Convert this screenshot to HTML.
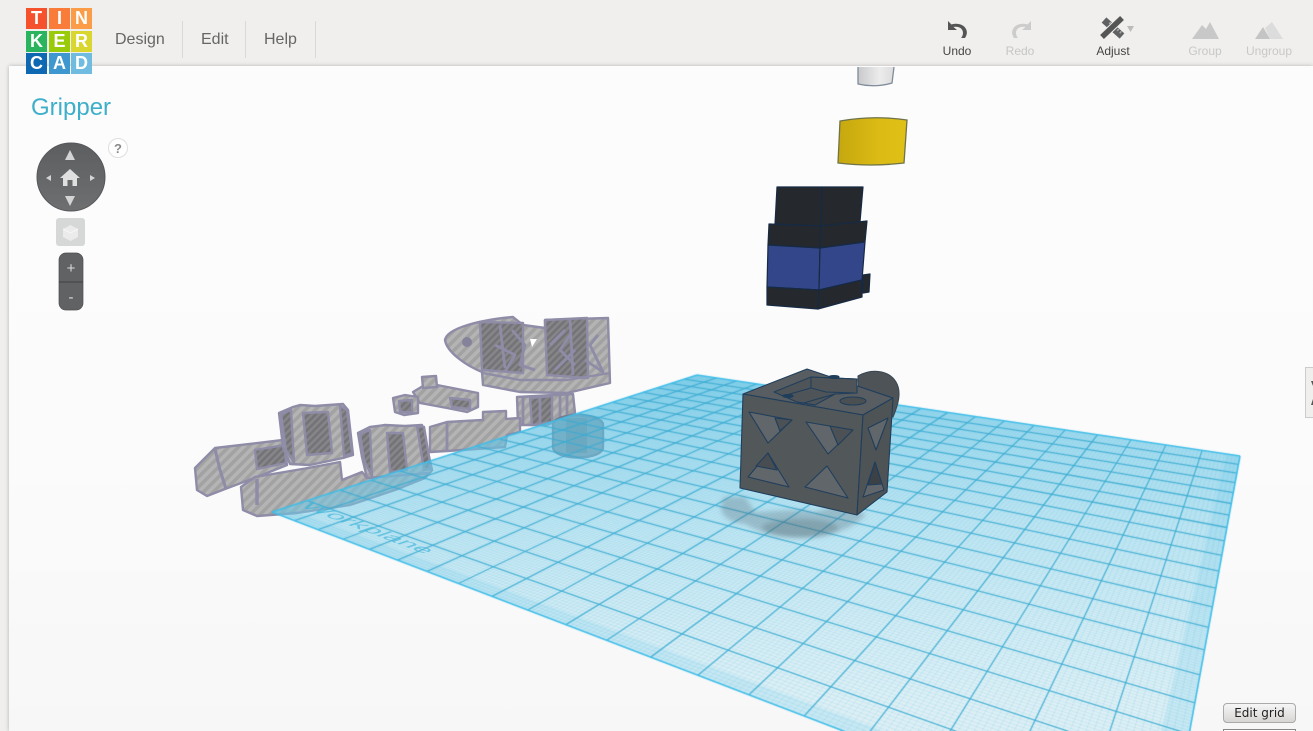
<!DOCTYPE html>
<html><head><meta charset="utf-8"><title>Gripper</title>
<style>
html,body{margin:0;padding:0;width:1313px;height:731px;overflow:hidden;background:#f0efed;font-family:"Liberation Sans",sans-serif}
#wrap{position:absolute;left:0;top:0;width:1313px;height:731px;overflow:hidden;background:#f0efed}
.abs{position:absolute}
#panel{position:absolute;left:9px;top:66px;width:1304px;height:665px;background:linear-gradient(#fcfcfc 0%,#fbfbfb 60%,#f7f7f7 100%);box-shadow:0 0 4px rgba(0,0,0,.25)}
svg,canvas{position:absolute;left:0;top:0}
.cell{position:absolute;width:21px;height:21px;color:#fff;font-weight:bold;font-size:18px;line-height:21px;text-align:center}
.menu{position:absolute;top:31px;font-size:16px;line-height:18px;color:#666}
.sep{position:absolute;top:21px;width:1px;height:37px;background:#d9d9d7}
.tl{position:absolute;top:44px;width:70px;text-align:center;font-size:12px;line-height:14px}
</style></head><body><div id="wrap">
<div id="panel"></div>
<svg width="1313" height="731" viewBox="0 0 1313 731">
<defs>
<pattern id="st" width="7" height="7" patternUnits="userSpaceOnUse" patternTransform="rotate(45)"><rect width="7" height="7" fill="#b4b4b4"/><rect width="3.500" height="7" fill="#a2a2a2"/></pattern>
<pattern id="dk" width="5" height="5" patternUnits="userSpaceOnUse" patternTransform="rotate(45)"><rect width="5" height="5" fill="#868689"/><rect width="2.500" height="5" fill="#737378"/></pattern>
</defs>
<g stroke="#8e8ca6" stroke-width="2.400" stroke-linejoin="round" fill="url(#st)">
<path d="M445 340C447 328 480 320 513 317L523 325L545 328V320L608 318L610 383L567 393L520 392L483 385L482 372C465 365 447 352 445 340Z"/>
<path d="M480 322L523 323V373L482 370Z" fill="url(#dk)"/>
<path d="M545 320L587 318L588 378L547 375Z" fill="url(#dk)"/>
<path d="M530 339L537 339L532 347Z" fill="#fff" stroke="none"/>
<circle cx="467" cy="342" r="5" fill="#85839b" stroke="none"/>
<path d="M495 345L515 355L505 372M512 330L525 345L520 365L535 370M570 335L560 350L575 365M598 335L590 345L603 372L585 360M550 345L565 330M555 370L575 350M500 325L505 368M570 320L573 375" fill="none" stroke-width="2.800"/>
<path d="M483 373L520 380L567 380L610 373" fill="none"/>
<path d="M517 397L573 394L575 413L547 425L518 425Z"/>
<path d="M530 398L552 396V422L532 425Z" fill="url(#dk)"/>
<path d="M523 397V424M540 396V424M560 395V419M567 395V416" fill="none" stroke-width="2.800"/>
<path d="M430 427L447 422L483 420V412L506 411V419L520 418V432L507 435L505 447L447 451L430 452Z"/>
<path d="M447 422V451" fill="none" stroke-width="2.800"/>
<path d="M413 392L423 386L437 385L478 393V407L467 412L447 408L420 403Z"/>
<path d="M450 398L470 400V409L452 407Z" fill="url(#dk)"/>
<path d="M422 377L436 376L437 387L423 388Z"/>
<path d="M393 398L405 395L418 397V413L404 415L395 412Z"/>
<path d="M399 401L412 400V412L400 412Z" fill="url(#dk)"/>
<path d="M195 468L215 448L283 440L287 465L257 477L225 489L207 496L197 490Z"/>
<path d="M255 450L285 445L286 463L257 469Z" fill="url(#dk)"/>
<path d="M215 449L220 470L226 489" fill="none" stroke-width="3"/>
<path d="M241 487L255 477L308 468L340 462L342 480L362 472L367 478L432 470L425 478L395 490L350 505L297 513L257 516L243 510Z"/>
<path d="M257 479V505" fill="none" stroke-width="3.500"/>
<path d="M279 413L293 407L300 405L315 406L343 404L348 410L353 455L343 458L310 465L290 464L283 447Z"/>
<path d="M303 413L328 412L332 453L307 455Z" fill="url(#dk)"/>
<path d="M281 414L291 410L294 462L286 450Z" fill="url(#dk)"/>
<path d="M340 406L347 410L352 453L344 456Z" fill="url(#dk)"/>
<path d="M358 433L370 427L385 425L405 426L422 425L432 470L430 473L367 478L362 457Z"/>
<path d="M387 433L403 433L407 470L390 472Z" fill="url(#dk)"/>
<path d="M360 434L370 430L372 476L364 460Z" fill="url(#dk)"/>
<path d="M417 426L424 427L431 469L424 470Z" fill="url(#dk)"/>
<path d="M553 425C553 412 603 412 603 425V447C603 461 553 461 553 447Z" fill="#8f8f96" stroke="#77778a"/>
<path d="M566 418H587V453H566Z" fill="#77777f" stroke="none"/>
</g>
</svg>
<canvas id="c" width="1313" height="731"></canvas>
<svg width="1313" height="731" viewBox="0 0 1313 731">
<defs>
<linearGradient id="yl" x1="0" x2="1"><stop offset="0" stop-color="#c6a70f"/><stop offset=".6" stop-color="#dbbb14"/><stop offset="1" stop-color="#e0c116"/></linearGradient>
<linearGradient id="wh" x1="0" x2="1"><stop offset="0" stop-color="#c8c9cb"/><stop offset=".6" stop-color="#ececec"/><stop offset="1" stop-color="#dcdcdc"/></linearGradient>
<linearGradient id="nav" x1="0" x2="0" y1="0" y2="1"><stop offset="0" stop-color="#5c5e60"/><stop offset="1" stop-color="#6d6f71"/></linearGradient>
<filter id="bl"><feGaussianBlur stdDeviation="2.500"/></filter>
</defs>
<text transform="matrix(1.2,.46,-.85,.28,299,506)" font-size="22" font-family="Liberation Sans" fill="#3cb4da" fill-opacity=".65">Workplane</text>
<g filter="url(#bl)" fill="#4f6672">
<path d="M725 497C716 508 722 522 745 524C755 530 775 539 805 538C830 537 855 528 866 514L838 505L815 512C795 508 770 512 755 512L745 497Z" fill-opacity=".3"/>
<ellipse cx="800" cy="528" rx="38" ry="9" fill-opacity=".3"/>
</g>
<!-- white cylinder -->
<path d="M858 67L858 84Q875 88 892 83L894 67" fill="url(#wh)" stroke="#7f8c9a" stroke-width="1.300"/>
<!-- yellow -->
<path d="M840 121Q873 115 907 120L904 163Q871 167 838 163Z" fill="url(#yl)" stroke="#6f7348" stroke-width="1.300"/>
<!-- dark stack -->
<g stroke="#162a44" stroke-width="1.200" stroke-linejoin="round">
<path d="M777 187H822L821 226L775 224Z" fill="#25282c"/>
<path d="M822 187H863L860 222L821 226Z" fill="#25282c"/>
<path d="M863 275L870 274L869 292L863 293Z" fill="#25282c"/>
<path d="M769 224L821 226L820 248L768 245Z" fill="#25282c"/>
<path d="M821 226L867 221L865 242L820 248Z" fill="#25282c"/>
<path d="M768 245L820 248L819 290L767 287Z" fill="#33468a"/>
<path d="M820 248L865 242L862 280L819 290Z" fill="#33468a"/>
<path d="M767 287L819 290L818 309L767 305Z" fill="#25282c"/>
<path d="M819 290L862 280V297L818 309Z" fill="#25282c"/>
</g>
<!-- cube -->
<g stroke="#1f3e5c" stroke-width="1.100" stroke-linejoin="round">
<path d="M858 376C870 369 888 369 896 382C902 392 898 405 893 417L860 420Z" fill="#4e5357" stroke="#3a4854"/>
<path d="M743 394L807 369L893 398L863 415Z" fill="#585d61"/>
<path d="M743 394L863 415L857 515L740 488Z" fill="#52575a"/>
<path d="M863 415L893 398L887 492L857 515Z" fill="#4e5356"/>
<path d="M774 392L811 377L857 379V393L835 394L815 405L797 402Z" fill="#4f5458"/>
<path d="M811 377L857 379M811 377V388L826 392L855 393M811 388L783 396M797 402L815 405M800 404L835 394" fill="none"/>
<ellipse cx="853" cy="401" rx="13" ry="4" fill="#4a4f52"/>
<ellipse cx="788" cy="396" rx="5" ry="1.500" fill="#1f3e5c"/>
<ellipse cx="834" cy="377" rx="5" ry="1.500" fill="#1f3e5c"/>
<path d="M749 412L792 420L768 443Z" fill="#61666a"/>
<path d="M775 418L792 420L780 431Z" fill="#4c5155"/>
<path d="M806 422L853 430L828 454Z" fill="#61666a"/>
<path d="M830 426L853 430L838 445Z" fill="#4c5155"/>
<path d="M768 453L789 487L748 477Z" fill="#61666a"/>
<path d="M768 453L777 470L756 466Z" fill="#484d51"/>
<path d="M827 466L848 498L805 487Z" fill="#61666a"/>
<path d="M868 428L888 418L876 450Z" fill="#61666a"/>
<path d="M875 462L884 490L863 497Z" fill="#61666a"/>
<path d="M875 462L882 484L868 485Z" fill="#3c4145"/>
</g>
<!-- nav -->
<circle cx="71" cy="177" r="34" fill="url(#nav)" stroke="#55575a" stroke-width="1"/>
<g fill="#d4d4d4">
<path d="M70 150L75 160H65Z"/><path d="M70 206L65 196H75Z"/><path d="M46 178L51 175V181Z"/><path d="M95 178L90 175V181Z"/>
<path d="M70 169L80 178H77V186H72.500V180H67.500V186H63V178H60Z" fill="#e0e0e0"/>
</g>
<circle cx="118" cy="148" r="9.500" fill="#fff" stroke="#dedede"/>
<text x="118" y="153" text-anchor="middle" font-size="13" font-weight="bold" fill="#8a8a8a" font-family="Liberation Sans">?</text>
<rect x="56" y="218" width="29" height="28" rx="3" fill="#d6d7d7"/>
<path d="M70.500 225L78 229V237L70.500 241L63 237V229Z" fill="#ebebeb"/>
<path d="M63 229L70.500 233L78 229" fill="none" stroke="#f6f6f6"/>
<rect x="59" y="253" width="24" height="57" rx="7" fill="#606264" stroke="#4d4e50" stroke-width=".7"/>
<path d="M59 282H83" stroke="#3f4042"/>
<text x="71" y="273" text-anchor="middle" font-size="15" fill="#dcdcdc" font-family="Liberation Sans">+</text>
<text x="71" y="302" text-anchor="middle" font-size="15" fill="#dcdcdc" font-family="Liberation Sans">-</text>
<!-- toolbar icons -->
<path d="M948 21V30H957L953.500 27C958 26 963 28 963 33C963 35 962 37 961 38H965C967 35 967.500 32 966 29C964 24.500 957 22.500 951.500 24.500Z" fill="#555"/>
<path d="M1031 21V30H1022L1025.500 27C1021 26 1016 28 1016 33C1016 35 1017 37 1018 38H1014C1012 35 1011.500 32 1013 29C1015 24.500 1022 22.500 1027.500 24.500Z" fill="#ccc"/>
<path d="M1104 20L1122 36" stroke="#5f6163" stroke-width="7" fill="none"/>
<path d="M1108 24L1121 35.500" stroke="#a8a8a8" stroke-width="2.500" stroke-dasharray="1.500 2" fill="none" transform="translate(1.500,-1.500)"/>
<path d="M1121 19L1102 37" stroke="#f0efed" stroke-width="7.500" fill="none"/>
<path d="M1122 18L1102 37" stroke="#555" stroke-width="5.500" fill="none"/>
<path d="M1127 26H1134L1130.500 32Z" fill="#bbb"/>
<path d="M1192 39L1202 25L1206 29L1210 22L1219 39Z" fill="#c8c8c8"/>
<path d="M1255 39L1263 27L1270 39Z" fill="#c4c4c4"/>
<path d="M1265 28L1272 22L1283 39H1270Z" fill="#dcdcdc"/>
<!-- side tab -->
<rect x="1305.500" y="367.500" width="10" height="50" fill="#f0efed" stroke="#cccccc"/>
<path d="M1311 381L1313 386V381ZM1313 399L1311 405H1313Z" fill="#555"/>
</svg>
<div class="cell" style="left:26px;top:8px;background:#f4512c">T</div>
<div class="cell" style="left:49px;top:8px;background:#f97c3b">I</div>
<div class="cell" style="left:71px;top:8px;background:#fb9c48">N</div>
<div class="cell" style="left:26px;top:31px;background:#2bb45e">K</div>
<div class="cell" style="left:49px;top:31px;background:#9acb0b">E</div>
<div class="cell" style="left:71px;top:31px;background:#d8d62f">R</div>
<div class="cell" style="left:26px;top:53px;background:#0e68b2">C</div>
<div class="cell" style="left:49px;top:53px;background:#3f97cf">A</div>
<div class="cell" style="left:71px;top:53px;background:#6fbce0">D</div>
<div class="menu" style="left:115px">Design</div><div class="sep" style="left:182px"></div>
<div class="menu" style="left:201px">Edit</div><div class="sep" style="left:245px"></div>
<div class="menu" style="left:264px">Help</div><div class="sep" style="left:315px"></div>
<div class="abs" style="left:31px;top:94px;font-size:24px;line-height:27px;color:#3eafca">Gripper</div>
<div class="tl" style="left:922px;color:#444">Undo</div>
<div class="tl" style="left:985px;color:#c6c6c6">Redo</div>
<div class="tl" style="left:1078px;color:#444">Adjust</div>
<div class="tl" style="left:1170px;color:#c8c8c8">Group</div>
<div class="tl" style="left:1234px;color:#c8c8c8">Ungroup</div>
<div class="abs" style="left:1223px;top:703px;width:71px;height:18px;border:1px solid #aaa;border-radius:4px;background:linear-gradient(#f6f6f6,#d8d6d4);font:12px/18px 'DejaVu Sans',sans-serif;color:#222;text-align:center">Edit grid</div>
<div class="abs" style="left:1223px;top:729px;width:71px;height:1px;border:1px solid #888;background:#fff"></div>
</div>
<script>
(function(){
var A=[697,375],B=[1240,456],C=[1167,855],D=[272,512];
var dx1=B[0]-C[0],dx2=D[0]-C[0],sx=A[0]-B[0]+C[0]-D[0];
var dy1=B[1]-C[1],dy2=D[1]-C[1],sy=A[1]-B[1]+C[1]-D[1];
var det=dx1*dy2-dx2*dy1;
var g=(sx*dy2-dx2*sy)/det,h=(dx1*sy-sx*dy1)/det;
var a=B[0]*(1+g)-A[0],b=D[0]*(1+h)-A[0],d=B[1]*(1+g)-A[1],e=D[1]*(1+h)-A[1];
function P(u,v){var w=g*u+h*v+1;return [(a*u+b*v+A[0])/w,(d*u+e*v+A[1])/w];}
var x=document.getElementById('c').getContext('2d');
function poly(u0,v0,u1,v1,f){x.beginPath();var p=[P(u0,v0),P(u1,v0),P(u1,v1),P(u0,v1)];x.moveTo(p[0][0],p[0][1]);for(var i=1;i<4;i++)x.lineTo(p[i][0],p[i][1]);x.closePath();x.fillStyle=f;x.fill();}
var gr=x.createLinearGradient(0,375,0,700);
gr.addColorStop(0,'rgba(105,198,232,.62)');gr.addColorStop(.45,'rgba(140,212,236,.45)');gr.addColorStop(1,'rgba(165,222,240,.3)');
poly(0,0,1,1,gr);
poly(.982,0,1,1,'rgba(90,195,230,.16)');
poly(0,.982,1,1,'rgba(90,195,230,.16)');
function ln(u0,v0,u1,v1,c,w){var p=P(u0,v0),q=P(u1,v1);x.beginPath();x.moveTo(p[0],p[1]);x.lineTo(q[0],q[1]);x.strokeStyle=c;x.lineWidth=w;x.stroke();}
var i;
for(i=0;i<=200;i++){if(i%10==0)continue;var t=i/200;
 ln(t,0,t,1,'rgba(70,180,220,.3)',.55);ln(0,t,1,t,'rgba(70,180,220,.3)',.55);}
for(i=1;i<20;i++){var t=i/20;
 ln(t,0,t,1,'rgba(60,172,210,.9)',1.3);ln(0,t,1,t,'rgba(60,172,210,.9)',1.3);}
ln(0,0,1,0,'#3fbde8',1.4);ln(1,0,1,1,'#3fbde8',1.6);ln(1,1,0,1,'#3fbde8',1.6);ln(0,1,0,0,'#3fbde8',1.4);
})();
</script>
</body></html>
